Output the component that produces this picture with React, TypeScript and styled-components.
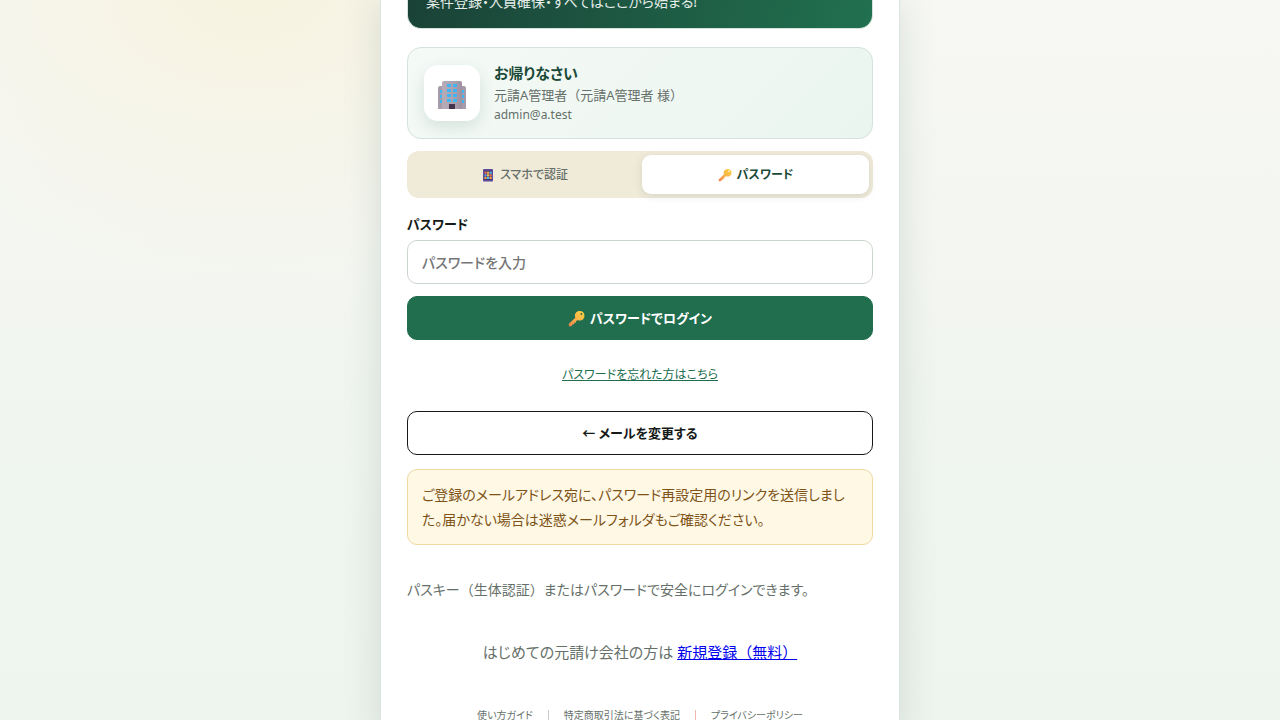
import React from "react";
import styled, { createGlobalStyle } from "styled-components";

const Global = createGlobalStyle`
  *, *::before, *::after { box-sizing: border-box; }
  html { scrollbar-width: none; }
  body {
    margin: 0;
    min-height: 100vh;
    color: #161a17;
    font-family: "Noto Sans", "Noto Sans CJK JP", sans-serif;
    font-feature-settings: "palt";
    font-size: 14px;
    line-height: 25px;
    background:
      radial-gradient(ellipse 400px 300px at 250px -20px, #f6f2df 0%, rgba(246, 242, 223, 0) 100%),
      linear-gradient(180deg, #f7f8f4 0%, #f4f6f1 36%, #f0f5ef 56%, #eef4ee 100%);
  }
  p, h2 { margin: 0; }
`;

const Shell = styled.main`
  width: 100%;
  max-width: 520px;
  min-height: 100vh;
  margin: 0 auto;
  padding: 0 26px 12px;
  display: flex;
  flex-direction: column;
  background: #fff;
  border: solid #dce5df;
  border-width: 0 1px;
  box-shadow: 0 0 36px rgba(31, 77, 61, 0.15);
`;

const Hero = styled.header`
  display: flex;
  align-items: flex-end;
  height: 29px;
  padding: 0 18px 14px;
  border: solid #d3e2da;
  border-width: 0 1px 1px;
  border-radius: 0 0 14px 14px;
  color: #e4ede8;
  background: linear-gradient(100deg, #1a4237, #21704f);
`;

const Account = styled.section`
  display: flex;
  align-items: center;
  gap: 14px;
  height: 92px;
  margin-top: 18px;
  padding: 0 16px;
  border: 1px solid #d6e3dc;
  border-radius: 14px;
  background: linear-gradient(135deg, #f5faf7, #eaf5ef);
`;

const Avatar = styled.div`
  display: grid;
  place-items: center;
  width: 56px;
  height: 56px;
  border-radius: 14px;
  background: #fff;
  box-shadow: 0 6px 16px rgba(31, 92, 68, 0.14);
`;

const AccountText = styled.div`
  color: #66706a;
  line-height: 20px;
`;

const Greeting = styled.h2`
  color: #1b4a38;
  font-size: 15px;
  line-height: 24px;
  font-weight: 700;
`;

const AccountName = styled.p`
  font-size: 13px;
`;

const AccountMail = styled.p`
  font-size: 12px;
`;

const FullWidth = styled.span`
  font-feature-settings: normal;
`;

const Tabs = styled.div`
  display: grid;
  grid-template-columns: 1fr 1fr;
  gap: 4px;
  margin-top: 12px;
  padding: 4px;
  border-radius: 12px;
  background: #f0ead9;
`;

const Tab = styled.button<{ $active?: boolean }>`
  display: flex;
  align-items: center;
  justify-content: center;
  gap: 5px;
  height: 39px;
  padding: 0;
  border: 0;
  border-radius: 9px;
  font: inherit;
  font-feature-settings: inherit;
  font-size: 12px;
  font-weight: ${(p) => (p.$active ? 700 : 500)};
  color: ${(p) => (p.$active ? "#1b4a38" : "#66706a")};
  background: ${(p) => (p.$active ? "#fff" : "transparent")};
  box-shadow: ${(p) => (p.$active ? "0 2px 8px rgba(31, 77, 61, 0.12)" : "none")};
`;

const Form = styled.form`
  display: flex;
  flex-direction: column;
`;

const Label = styled.label`
  margin-top: 15px;
  font-size: 13px;
  line-height: 22px;
  font-weight: 700;
`;

const Field = styled.input`
  width: 100%;
  height: 44px;
  margin-top: 5px;
  padding: 0 14px;
  border: 1px solid #ccd5cc;
  border-radius: 10px;
  background: #fff;
  font: inherit;
  font-feature-settings: inherit;
  &::placeholder { color: #757575; opacity: 1; font-weight: 500; }
`;

const Button = styled.button<{ $primary?: boolean }>`
  display: flex;
  align-items: center;
  justify-content: center;
  gap: 5px;
  width: 100%;
  height: 44px;
  border: 1px solid ${(p) => (p.$primary ? "#216e4e" : "#161a17")};
  border-radius: 10px;
  font: inherit;
  font-feature-settings: inherit;
  font-size: 13px;
  font-weight: 700;
  color: ${(p) => (p.$primary ? "#fff" : "#161a17")};
  background: ${(p) => (p.$primary ? "#216e4e" : "#fff")};
`;

const Submit = styled(Button)`
  margin-top: 12px;
`;

const Forgot = styled.a`
  align-self: center;
  margin: 25px 0 26px;
  color: #216e4e;
  font-size: 12px;
  line-height: 20px;
`;

const Notice = styled.p`
  margin-top: 14px;
  padding: 12px 14px;
  border: 1px solid #eed9a0;
  border-radius: 10px;
  color: #7d5318;
  background: #fff8e5;
`;

const Hint = styled.p`
  margin-top: 32px;
  color: #66706a;
`;

const SignUp = styled.p`
  margin-top: 38px;
  font-size: 15px;
  text-align: center;
  color: #66706a;
  a { color: #0000ee; }
`;

const Footer = styled.footer`
  display: flex;
  justify-content: center;
  align-items: center;
  gap: 15px;
  margin-top: 41px;
  font-size: 10px;
  line-height: 18px;
`;

const FooterLink = styled.a`
  color: #66706a;
  text-decoration: none;
`;

const Divider = styled.span<{ $tone: string }>`
  width: 1px;
  height: 10px;
  background: ${(p) => p.$tone};
`;

const Building = () => (
  <svg width="30" height="30" viewBox="0 -2 30 30" overflow="visible" aria-hidden="true">
    <defs>
      <linearGradient id="wall" x1="0" x2="1" y1="0" y2="0">
        <stop offset="0" stopColor="#b7abb7" />
        <stop offset="0.5" stopColor="#aea4b1" />
        <stop offset="1" stopColor="#9c91a1" />
      </linearGradient>
    </defs>
    <path d="M1 8Q1 6 3 6H27Q29 6 29 8V29H1Z" fill="#a69ba9" />
    <path d="M5 3Q5 1 7 1H23Q25 1 25 3V29H5Z" fill="url(#wall)" />
    {[4, 9, 14, 19].map((y) => (
      <g key={y} fill="#3fb5f4">
        <rect x="10" y={y} width="4" height="3" />
        <rect x="16" y={y} width="4" height="3" />
        {y > 4 && <rect x="3" y={y + 1} width="2" height="3" />}
        {y > 4 && <rect x="25" y={y + 1} width="2" height="3" />}
      </g>
    ))}
    <rect x="12" y="24" width="6" height="5" fill="#43334c" />
  </svg>
);

const apps = [
  ["#e9705a", "#f0a34e", "#58b7e8"],
  ["#5c9ce8", "#f0c04e", "#e9705a"],
  ["#f0a34e", "#58b7e8", "#f0a34e"],
];

const Phone = () => (
  <svg width="14" height="14" viewBox="0 0 14 14" aria-hidden="true">
    <rect x="2" y="1" width="10" height="12.5" rx="0.8" fill="#5d4c9c" />
    <rect x="3" y="2.5" width="8" height="9.5" fill="#40386e" />
    {apps.map((row, r) =>
      row.map((fill, c) => (
        <rect key={`${r}-${c}`} x={3.4 + c * 2.6} y={3.6 + r * 2.6} width="2.2" height="2.2" fill={fill} />
      ))
    )}
  </svg>
);

const Key = ({ size }: { size: number }) => (
  <svg width={size} height={size} viewBox="0 0 16 16" aria-hidden="true">
    <defs>
      <linearGradient id="gold" x1="1" x2="0" y1="0" y2="1">
        <stop offset="0" stopColor="#ffd13f" />
        <stop offset="0.55" stopColor="#f8b24b" />
        <stop offset="1" stopColor="#ee7f4c" />
      </linearGradient>
    </defs>
    <path
      fillRule="evenodd"
      fill="url(#gold)"
      d="M11 1C13.8 1 15.5 3 15.5 5.3C15.5 8 13.6 9.8 11 9.8C10 9.8 9.4 9.6 8.8 9.3L7.5 10.8L7.3 12H6L5.8 13.3H4.5L3.2 15.2H.8V13L6.9 7.2C6.6 6.6 6.5 6 6.5 5.3C6.5 2.8 8.5 1 11 1ZM12.6 2.9A.9 .9 0 1 0 12.6 4.7A.9 .9 0 0 0 12.6 2.9Z"
    />
  </svg>
);

export default function App() {
  return (
    <>
      <Global />
      <Shell>
        <Hero>案件登録・人員確保・すべてはここから始まる!</Hero>
        <Account>
          <Avatar><Building /></Avatar>
          <AccountText>
            <Greeting>お帰りなさい</Greeting>
            <AccountName><FullWidth>元請A管理者（元請A管理者 様）</FullWidth></AccountName>
            <AccountMail>admin@a.test</AccountMail>
          </AccountText>
        </Account>
        <Tabs role="tablist">
          <Tab type="button" role="tab" aria-selected={false}><Phone />スマホで認証</Tab>
          <Tab type="button" role="tab" aria-selected $active><Key size={14} />パスワード</Tab>
        </Tabs>
        <Form onSubmit={(e) => e.preventDefault()}>
          <Label htmlFor="password">パスワード</Label>
          <Field id="password" type="password" placeholder="パスワードを入力" />
          <Submit type="submit" $primary><Key size={17} />パスワードでログイン</Submit>
          <Forgot href="#forgot">パスワードを忘れた方はこちら</Forgot>
          <Button type="button">← メールを変更する</Button>
        </Form>
        <Notice role="status">
          ご登録のメールアドレス宛に、パスワード再設定用のリンクを送信しました。届かない場合は迷惑メールフォルダもご確認ください。
        </Notice>
        <Hint>パスキー<FullWidth>（生体認証）</FullWidth>またはパスワードで安全にログインできます。</Hint>
        <SignUp>
          はじめての元請け会社の方は <a href="#register"><FullWidth>新規登録（無料）</FullWidth></a>
        </SignUp>
        <Footer>
          <FooterLink href="#guide">使い方ガイド</FooterLink>
          <Divider $tone="#c9cdc9" />
          <FooterLink href="#law">特定商取引法に基づく表記</FooterLink>
          <Divider $tone="#f0b8b0" />
          <FooterLink href="#privacy">プライバシーポリシー</FooterLink>
        </Footer>
      </Shell>
    </>
  );
}
